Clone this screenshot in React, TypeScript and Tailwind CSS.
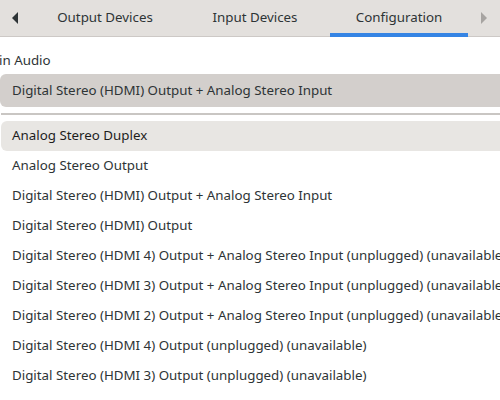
import React from 'react';

const items = [
  'Analog Stereo Duplex',
  'Analog Stereo Output',
  'Digital Stereo (HDMI) Output + Analog Stereo Input',
  'Digital Stereo (HDMI) Output',
  'Digital Stereo (HDMI 4) Output + Analog Stereo Input (unplugged) (unavailable)',
  'Digital Stereo (HDMI 3) Output + Analog Stereo Input (unplugged) (unavailable)',
  'Digital Stereo (HDMI 2) Output + Analog Stereo Input (unplugged) (unavailable)',
  'Digital Stereo (HDMI 4) Output (unplugged) (unavailable)',
  'Digital Stereo (HDMI 3) Output (unplugged) (unavailable)',
];

export default function App() {
  return (
    <div
      className="w-[500px] h-[400px] overflow-hidden bg-white text-[13.33px] text-[#2e3436]"
      style={{ fontFamily: '"Noto Sans", sans-serif' }}
    >
      {/* Tab strip */}
      <div className="flex h-[37px] items-stretch bg-[#e3e0dd] border-b border-[#cdc9c6]">
        <div className="flex w-[30px] items-center justify-center">
          <svg width="6" height="12" viewBox="0 0 6 12">
            <path d="M6 0 L0 6 L6 12 Z" fill="#2e3436" />
          </svg>
        </div>
        <div className="flex w-[150px] items-center justify-center">Output Devices</div>
        <div className="flex w-[150px] items-center justify-center">Input Devices</div>
        <div className="relative flex w-[138px] items-center justify-center">
          Configuration
          <div className="absolute bottom-[-1px] left-0 right-0 h-[4px] bg-[#3584e4]" />
        </div>
        <div className="flex flex-1 items-center justify-center">
          <svg width="6" height="12" viewBox="0 0 6 12">
            <path d="M0 0 L6 6 L0 12 Z" fill="#a7a4a1" />
          </svg>
        </div>
      </div>

      {/* Card section */}
      <div className="pt-[12px]">
        <div className="h-[22px] leading-[22px] -ml-[1px]">in Audio</div>
        <div className="mt-[3px] flex h-[33px] items-center rounded-l-[6px] bg-[#d3cfcc] pl-[12px]">
          Digital Stereo (HDMI) Output + Analog Stereo Input
        </div>
      </div>

      {/* Dropdown popup */}
      <div className="mt-[6px] ml-[1px] border-t-2 border-[#c9c6c3] pt-[6px]">
        <div className="flex flex-col">
          {items.map((label, i) => (
            <div
              key={label}
              className={
                i === 0
                  ? 'flex h-[30px] items-center whitespace-nowrap rounded-l-[6px] bg-[#e8e6e3] pl-[11px] text-[#1e1e1e]'
                  : 'flex h-[30px] items-center whitespace-nowrap pl-[11px]'
              }
            >
              {label}
            </div>
          ))}
        </div>
      </div>
    </div>
  );
}
